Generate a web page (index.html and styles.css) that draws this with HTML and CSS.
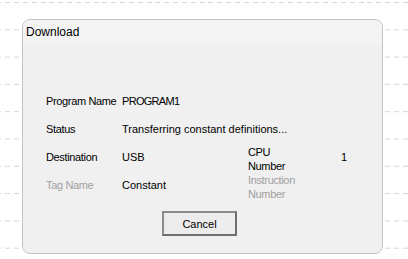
FILE: index.html
```html
<!DOCTYPE html>
<html>
<head>
<meta charset="utf-8">
<link rel="stylesheet" href="styles.css">
</head>
<body>
<svg class="grid" width="408" height="259" aria-hidden="true">
  <defs>
    <pattern id="g" x="-4" y="2" width="53" height="27.3" patternUnits="userSpaceOnUse">
      <line x1="0" y1="0.5" x2="53" y2="0.5" stroke="#d6d6d6" stroke-width="1" stroke-dasharray="5 4"/>
      <line x1="53.5" y1="0" x2="53.5" y2="27.3" stroke="#d6d6d6" stroke-width="1" stroke-dasharray="5 4"/>
    </pattern>
  </defs>
  <rect width="408" height="259" fill="url(#g)"/>
</svg>
<div class="dialog">
  <div class="title">Download</div>
  <div class="body">
    <div class="info">
      <div class="lbl">Program Name</div>
      <div class="val span caps">PROGRAM1</div>

      <div class="lbl">Status</div>
      <div class="val span">Transferring constant definitions...</div>

      <div class="lbl">Destination</div>
      <div class="val">USB</div>
      <div class="lbl two">CPU<br>Number</div>
      <div class="val">1</div>

      <div class="lbl dim">Tag Name</div>
      <div class="val">Constant</div>
      <div class="lbl two dim">Instruction<br>Number</div>
      <div class="val"></div>
    </div>
    <div class="actions">
      <button class="btn">Cancel</button>
    </div>
  </div>
</div>
</body>
</html>
```

FILE: styles.css
```css
html, body {
  margin: 0;
  padding: 0;
  background: #ffffff;
  width: 408px;
  height: 259px;
  overflow: hidden;
}
body {
  position: relative;
  font-family: "Liberation Sans", Arial, sans-serif;
  color: #000;
}
.grid {
  position: absolute;
  left: 0;
  top: 0;
  z-index: 0;
}
.dialog {
  position: relative;
  z-index: 1;
  margin: 19px 0 0 22px;
  width: 361px;
  height: 235px;
  box-sizing: border-box;
  border: 1px solid #c4c4c4;
  border-radius: 8px;
  background: #f0f0f0;
  overflow: hidden;
  display: flex;
  flex-direction: column;
}
.title {
  height: 25px;
  background: #f3f3f3;
  font-size: 12px;
  line-height: 25px;
  padding-left: 3px;
}
.body {
  flex: 1;
  padding: 42px 0 0 23px;
}
.info {
  display: grid;
  grid-template-columns: 76px 126px 93px 1fr;
  grid-auto-rows: 28px;
  font-size: 11px;
}
.lbl, .val {
  display: flex;
  align-items: center;
  white-space: nowrap;
}
.lbl {
  letter-spacing: -0.35px;
}
.caps {
  letter-spacing: -0.7px;
}
.span {
  grid-column: span 3;
}
.two {
  line-height: 14px;
  padding-top: 4px;
}
.dim {
  color: #a0a0a0;
}
.actions {
  display: flex;
  justify-content: center;
  padding-top: 12px;
  padding-right: 29px;
}
.btn {
  width: 75px;
  height: 25px;
  box-sizing: border-box;
  border: 2px solid #6e6e6e;
  border-top-color: #8a8a8a;
  border-left-color: #8a8a8a;
  background: #ececec;
  font-family: "Liberation Sans", Arial, sans-serif;
  font-size: 11px;
  color: #000;
  padding: 0;
}
```
